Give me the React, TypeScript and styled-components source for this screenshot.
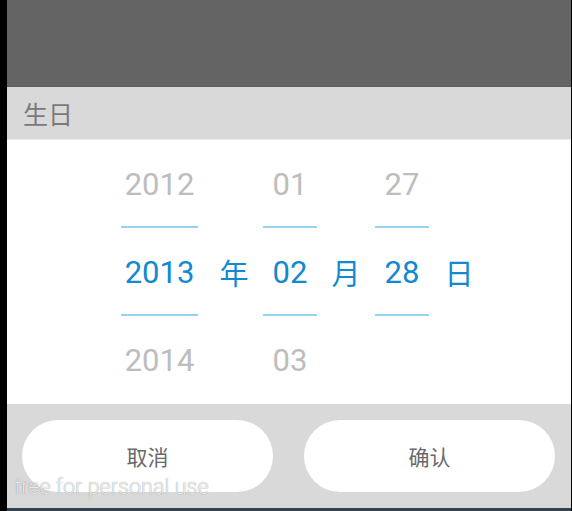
import { Fragment } from "react"
import styled, { createGlobalStyle } from "styled-components"

const GlobalStyle = createGlobalStyle`
    html, body {
        margin: 0;
        padding: 0;
        background: #000;
    }
    body {
        font-family: Roboto, "Noto Sans CJK SC", sans-serif;
    }
`

const Screen = styled.div`
    position: relative;
    width: 564px;
    height: 508px;
    margin-left: 7px;
    display: flex;
    flex-direction: column;
    overflow: hidden;
    border-bottom: 3px solid #33414c;
    box-sizing: content-box;
`

const Overlay = styled.div`
    height: 86px;
    background-color: #646464;
    border-bottom: 1px solid #5c5c5c;
`

const TitleBar = styled.div`
    height: 52px;
    background-color: #d9d9d9;
    border-bottom: 1px solid #ececec;
    display: flex;
    align-items: center;
    padding-left: 16px;
    font-family: "Noto Sans CJK SC", sans-serif;
    font-size: 25px;
    color: #7a7a7a;
`

const Picker = styled.div`
    height: 264px;
    background-color: #fff;
    display: flex;
    padding-left: 114px;
`

const Column = styled.div<{ $width: number }>`
    width: ${({ $width }) => $width}px;
    display: flex;
    flex-direction: column;
`

const Cell = styled.div<{ $selected?: boolean; $line?: boolean }>`
    height: 88px;
    box-sizing: border-box;
    display: flex;
    align-items: center;
    justify-content: center;
    font-family: Roboto, sans-serif;
    font-size: 31px;
    color: ${({ $selected }) => ($selected ? "#1289d1" : "#bdbdbd")};
    border-bottom: 2px solid ${({ $line }) => ($line ? "#95d3f0" : "transparent")};
    padding-top: 2px;
`

const Unit = styled.div<{ $left: number }>`
    align-self: center;
    width: 30px;
    margin-left: ${({ $left }) => $left}px;
    margin-right: 14px;
    text-align: center;
    font-family: "Noto Sans CJK SC", sans-serif;
    font-size: 29px;
    color: #1289d1;
`

const Footer = styled.div`
    flex: 1;
    background-color: #d9d9d9;
    display: grid;
    grid-template-columns: 1fr 1fr;
    gap: 31px;
    padding: 16px 16px 16px 15px;
`

const Button = styled.button`
    border: none;
    border-radius: 36px;
    background-color: #fff;
    height: 72px;
    font-family: "Noto Sans CJK SC", sans-serif;
    font-size: 21px;
    color: #696969;
    cursor: pointer;
`

const Watermark = styled.span`
    position: absolute;
    left: 7px;
    bottom: 9px;
    font-family: Roboto, sans-serif;
    font-weight: 300;
    font-size: 21.6px;
    color: rgba(244, 244, 244, 0.92);
    text-shadow: 0 0 1px rgba(0, 0, 0, 0.45);
    pointer-events: none;
`

const columns = [
    { width: 77, values: ["2012", "2013", "2014"], unit: "年", gap: 21 },
    { width: 54, values: ["01", "02", "03"], unit: "月", gap: 14 },
    { width: 54, values: ["27", "28", ""], unit: "日", gap: 15 },
]

const App = () => {
    return (
        <>
            <GlobalStyle />
            <Screen>
                <Overlay />
                <TitleBar>生日</TitleBar>
                <Picker>
                    {columns.map((col) => (
                        <Fragment key={col.unit}>
                            <Column $width={col.width}>
                                {col.values.map((v, i) => (
                                    <Cell key={i} $selected={i === 1} $line={i < 2}>
                                        {v}
                                    </Cell>
                                ))}
                            </Column>
                            <Unit $left={col.gap}>{col.unit}</Unit>
                        </Fragment>
                    ))}
                </Picker>
                <Footer>
                    <Button>取消</Button>
                    <Button>确认</Button>
                </Footer>
                <Watermark>free for personal use</Watermark>
            </Screen>
        </>
    )
}

export default App
